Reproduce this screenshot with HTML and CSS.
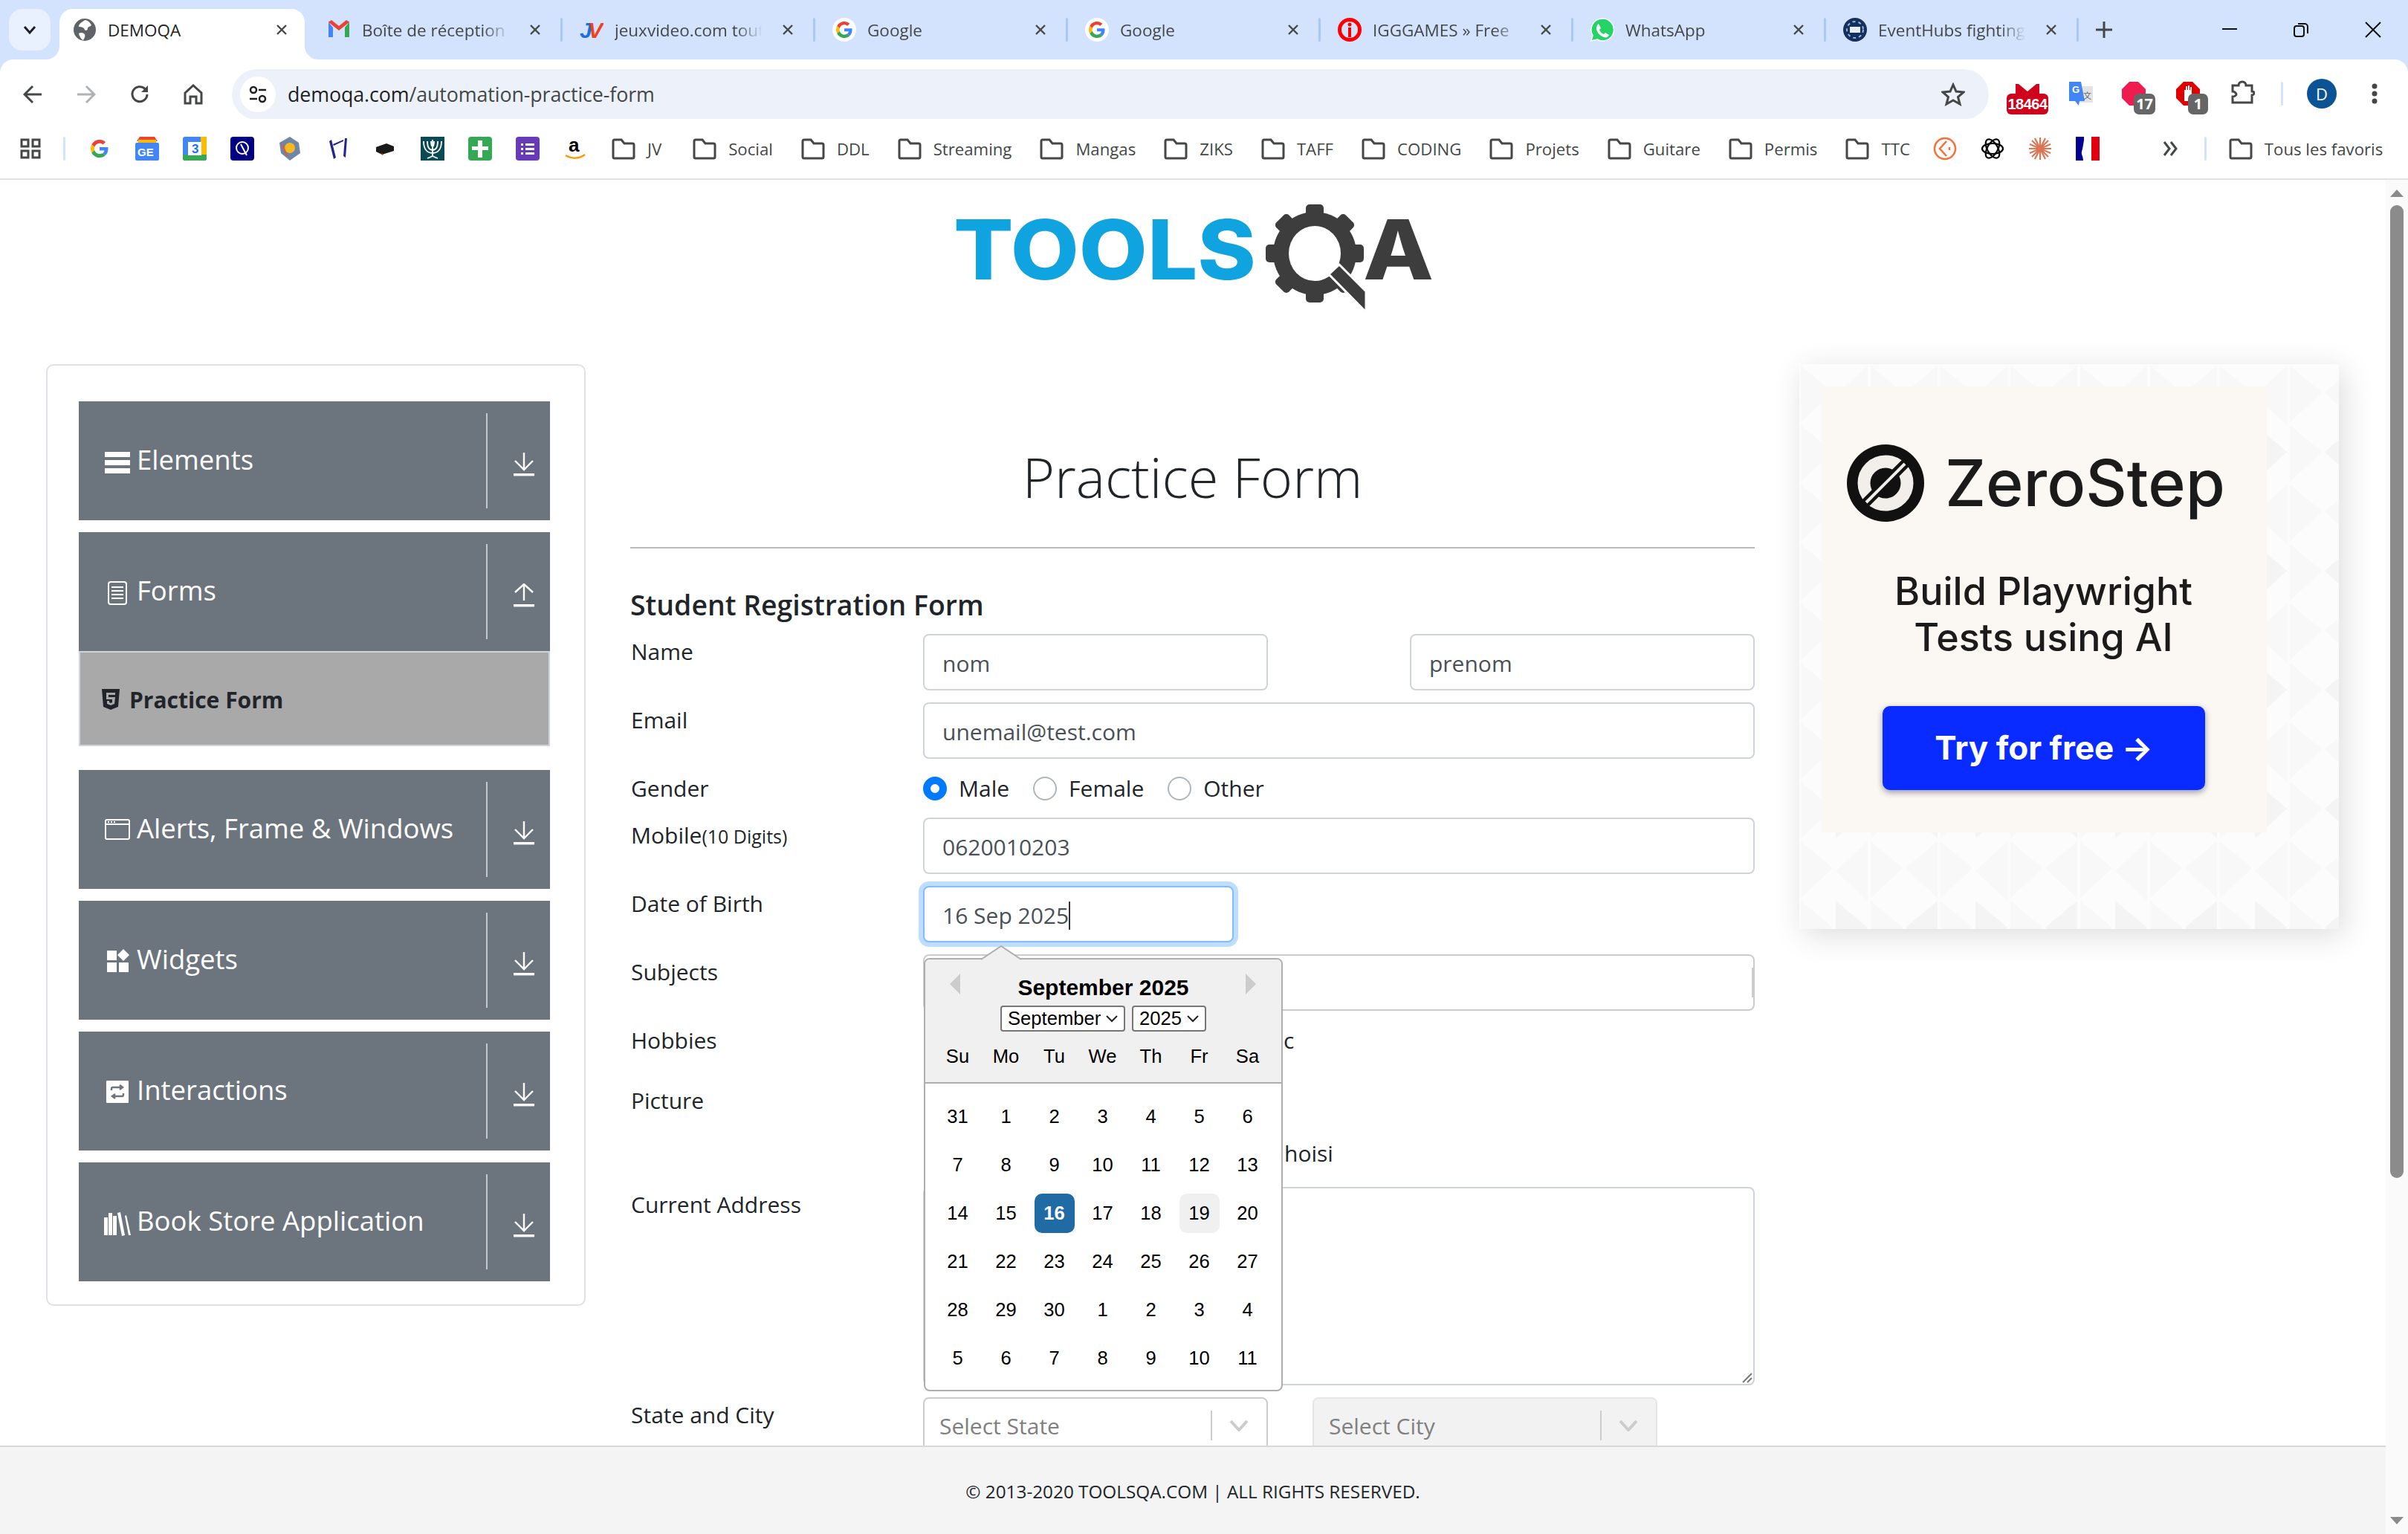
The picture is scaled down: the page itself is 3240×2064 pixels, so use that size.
FILE: index.html
```html
<!DOCTYPE html>
<html lang="fr">

<head>
	<meta charset="utf-8">
	<title>DEMOQA</title>
	<link rel="stylesheet" href="styles.css">
</head>

<body>
	<svg class="defs" width="0" height="0">
		<symbol id="x" viewBox="0 0 16 16"><path d="M2 2l12 12M14 2L2 14" stroke="#444746" stroke-width="2.4" fill="none" /></symbol>
		<symbol id="folder" viewBox="0 0 32 32"><path d="M2 6a2 2 0 0 1 2-2h9l4 5h11a2 2 0 0 1 2 2v16a2 2 0 0 1-2 2H4a2 2 0 0 1-2-2z" fill="none" stroke="#444746" stroke-width="3" /></symbol>
		<symbol id="google" viewBox="0 0 48 48">
			<path fill="#EA4335" d="M24 9.5c3.54 0 6.71 1.22 9.21 3.6l6.85-6.85C35.9 2.38 30.47 0 24 0 14.62 0 6.51 5.38 2.56 13.22l7.98 6.19C12.43 13.72 17.74 9.5 24 9.5z" />
			<path fill="#4285F4" d="M46.98 24.55c0-1.57-.15-3.09-.38-4.55H24v9.02h12.94c-.58 2.96-2.26 5.48-4.78 7.18l7.73 6c4.51-4.18 7.09-10.36 7.09-17.65z" />
			<path fill="#FBBC05" d="M10.53 28.59c-.48-1.45-.76-2.99-.76-4.59s.27-3.14.76-4.59l-7.98-6.19C.92 16.46 0 20.12 0 24c0 3.88.92 7.54 2.56 10.78l7.97-6.19z" />
			<path fill="#34A853" d="M24 48c6.48 0 11.93-2.13 15.89-5.81l-7.73-6c-2.15 1.45-4.92 2.3-8.16 2.3-6.26 0-11.57-4.22-13.47-9.91l-7.98 6.19C6.51 42.62 14.62 48 24 48z" />
		</symbol>
		<symbol id="down" viewBox="0 0 28 32"><path d="M14 0v22M2 11l12 12 12-12" fill="none" stroke="#fff" stroke-width="2.4" /><rect y="28" width="28" height="3.4" fill="#fff" /></symbol>
		<symbol id="up" viewBox="0 0 28 32"><path d="M14 23V1M2 12L14 1l12 11" fill="none" stroke="#fff" stroke-width="2.4" /><rect y="28" width="28" height="3.4" fill="#fff" /></symbol>
		<symbol id="chev" viewBox="0 0 26 16"><path d="M2 2l11 12L24 2" fill="none" stroke="#ccc" stroke-width="4" /></symbol>
		<pattern id="tri" width="188" height="160" patternUnits="userSpaceOnUse">
			<rect width="188" height="160" fill="#fcfcfc" />
			<path d="M2 2l43 36L2 78zM49 42l43-40v80zM96 2l43 36-43 40zM186 2v76l-43-40zM2 82l43 36-43 40zM96 82l43 36-43 40z" fill="#f8f8f8" />
			<path d="M49 82l43 36-43 40zM143 118l43-36v76z" fill="#f4f4f4" />
		</pattern>
	</svg>

	<header class="chrome">
		<div class="tabstrip">
			<div class="tab-search"><svg width="18" height="14" viewBox="0 0 18 14"><path d="M2 3l7 8 7-8" fill="none" stroke="#1f1f1f" stroke-width="3" /></svg></div>
			<div class="tab tab-active">
				<svg class="favicon" viewBox="0 0 32 32"><circle cx="16" cy="16" r="15" fill="#5f6368" /><path d="M16 3c-3 3-8 4-8 9 4 0 7 1 8 4 1 2 4 1 4-2 0-2 3-2 5-4-2-4-5-7-9-7zM8 21c3-2 6-1 8 1 1 2 0 5-2 8-3-1-5-5-6-9z" fill="#fff" /></svg>
				<span class="tab-title">DEMOQA</span>
				<svg class="tab-x"><use href="#x" /></svg>
			</div>
			<div class="tab tab-first">
				<svg class="favicon" viewBox="0 0 32 32"><path d="M2 6v20h6V13z" fill="#4285f4" /><path d="M24 26h6V6l-6 7z" fill="#34a853" /><path d="M2 6l14 11L30 6v-.5L26 3l-10 8L6 3 2 5.500z" fill="#ea4335" /></svg>
				<span class="tab-title">Boîte de réception</span>
				<svg class="tab-x"><use href="#x" /></svg>
			</div>
			<div class="tab">
				<svg class="favicon" viewBox="0 0 32 32"><text x="0" y="27" class="jv-j">J</text><text x="11" y="27" class="jv-v">V</text></svg>
				<span class="tab-title">jeuxvideo.com tout</span>
				<svg class="tab-x"><use href="#x" /></svg>
			</div>
			<div class="tab">
				<svg class="favicon" viewBox="0 0 32 32"><circle cx="16" cy="16" r="16" fill="#fff" /><use href="#google" x="5" y="5" width="22" height="22" /></svg>
				<span class="tab-title">Google</span>
				<svg class="tab-x"><use href="#x" /></svg>
			</div>
			<div class="tab">
				<svg class="favicon" viewBox="0 0 32 32"><circle cx="16" cy="16" r="16" fill="#fff" /><use href="#google" x="5" y="5" width="22" height="22" /></svg>
				<span class="tab-title">Google</span>
				<svg class="tab-x"><use href="#x" /></svg>
			</div>
			<div class="tab">
				<svg class="favicon" viewBox="0 0 32 32"><circle cx="16" cy="16" r="13.500" fill="none" stroke="#f00" stroke-width="5" /><rect x="14" y="13" width="4" height="13" fill="#f00" /><circle cx="16" cy="9" r="2.500" fill="#f00" /></svg>
				<span class="tab-title">IGGGAMES » Free</span>
				<svg class="tab-x"><use href="#x" /></svg>
			</div>
			<div class="tab">
				<svg class="favicon" viewBox="0 0 32 32"><path d="M16 1a15 15 0 0 0-13 22.500L1 31l8-2A15 15 0 1 0 16 1z" fill="#25d366" stroke="#fff" stroke-width="1.500" /><path d="M11 8l3 6-2 2c1 3 3 5 6 6l2-2 5 3c-1 3-4 4-7 3-5-2-9-6-10-11 0-3 1-6 3-7z" fill="#fff" /></svg>
				<span class="tab-title">WhatsApp</span>
				<svg class="tab-x"><use href="#x" /></svg>
			</div>
			<div class="tab">
				<svg class="favicon" viewBox="0 0 32 32"><circle cx="16" cy="16" r="16" fill="#14305f" /><circle cx="16" cy="16" r="11" fill="none" stroke="#9db4d4" stroke-width="2" stroke-dasharray="4 4" /><rect x="9" y="12" width="14" height="8" fill="#e8eef6" /></svg>
				<span class="tab-title">EventHubs fighting</span>
				<svg class="tab-x"><use href="#x" /></svg>
			</div>
			<svg class="new-tab" width="22" height="22" viewBox="0 0 22 22"><path d="M11 0v22M0 11h22" stroke="#444746" stroke-width="3" /></svg>
			<div class="win-btns">
				<svg width="20" height="4" viewBox="0 0 20 4"><rect width="20" height="2" fill="#111" /></svg>
				<svg width="20" height="20" viewBox="0 0 20 20"><rect x="1" y="5" width="13" height="14" rx="3" fill="none" stroke="#111" stroke-width="2" /><path d="M6 2h9a4 4 0 0 1 4 4v9" fill="none" stroke="#111" stroke-width="2" /></svg>
				<svg width="22" height="22" viewBox="0 0 22 22"><path d="M1 1l20 20M21 1L1 21" stroke="#111" stroke-width="2" /></svg>
			</div>
		</div>

		<div class="toolbar">
			<svg class="tool" width="26" height="26" viewBox="0 0 26 26"><path d="M25 13H3M13 2L2 13l11 11" fill="none" stroke="#444746" stroke-width="3" /></svg>
			<svg class="tool" width="26" height="26" viewBox="0 0 26 26"><path d="M1 13h22M13 2l11 11-11 11" fill="none" stroke="#b0b2b4" stroke-width="3" /></svg>
			<svg class="tool" width="26" height="26" viewBox="0 0 26 26"><path d="M23 13a10 10 0 1 1-3-7.500L23 8" fill="none" stroke="#444746" stroke-width="3" /><path d="M24 1v9h-9z" fill="#444746" /></svg>
			<svg class="tool" width="26" height="28" viewBox="0 0 26 28"><path d="M2 12L13 2l11 10v14h-7v-9H9v9H2z" fill="none" stroke="#444746" stroke-width="3" /></svg>
			<div class="omnibox">
				<div class="site-chip"><svg width="24" height="24" viewBox="0 0 24 24"><circle cx="6" cy="6" r="4" fill="none" stroke="#1f1f1f" stroke-width="2.500" /><path d="M13 6h10M1 18h10" stroke="#1f1f1f" stroke-width="2.500" /><circle cx="18" cy="18" r="4" fill="none" stroke="#1f1f1f" stroke-width="2.500" /></svg></div>
				<span class="url">demoqa.com<span class="url-path">/automation-practice-form</span></span>
				<svg class="star" width="32" height="32" viewBox="0 0 32 32"><path d="M16 3l4 9 10 1-7.500 6.500L25 29l-9-5-9 5 2.500-9.500L2 13l10-1z" fill="none" stroke="#444746" stroke-width="3" /></svg>
			</div>
			<div class="ext-row">
				<div class="ext ext-mail"><svg width="32" height="13" viewBox="0 0 32 13"><path d="M0 0h32v13H0z" fill="#d0021b" /><path d="M4 0l12 10L28 0z" fill="#fff" /></svg><span class="mail-count">18464</span></div>
				<svg class="ext-tr" width="32" height="32" viewBox="0 0 32 32"><rect x="14" y="6" width="18" height="22" fill="#e3e3e3" /><path d="M0 0h16l5 26h-7l-1 6-5-6H0z" fill="#4285f4" /><text x="4" y="15" class="tr-g">G</text><text x="19" y="23" class="tr-a">文</text></svg>
				<div class="ext ext-abp"><svg width="32" height="32" viewBox="0 0 32 32"><path d="M10 0h12l10 10v12L22 32H10L0 22V10z" fill="#ef1c4f" /></svg><span class="ext-badge">17</span></div>
				<div class="ext ext-ub"><svg width="32" height="32" viewBox="0 0 32 32"><path d="M10 0h12l10 10v12L22 32H10L0 22V10z" fill="#e00000" /><path d="M11 26V11h2V6h2v5h1V5h2v6h1V7h2v12h-4v7z" fill="#fff" /></svg><span class="ext-badge">1</span></div>
				<svg class="puzzle" width="32" height="32" viewBox="0 0 32 32"><path d="M2 7h8c0-3 2-5 5-5s5 2 5 5h8v8c2 0 3 1 3 2s-1 3-3 3v10H2v-8c3 0 5-2 5-3s-2-4-5-4z" fill="none" stroke="#444746" stroke-width="3" /></svg>
				<span class="bar-sep"></span>
				<span class="avatar">D</span>
				<svg class="dots" width="8" height="28" viewBox="0 0 8 28"><circle cx="4" cy="4" r="3.500" fill="#444746" /><circle cx="4" cy="14" r="3.500" fill="#444746" /><circle cx="4" cy="24" r="3.500" fill="#444746" /></svg>
			</div>
		</div>

		<div class="bookmarks">
			<svg class="apps" width="28" height="28" viewBox="0 0 28 28"><path d="M2 2h9v9H2zM17 2h9v9h-9zM2 17h9v9H2zM17 17h9v9h-9z" fill="none" stroke="#444746" stroke-width="3" /></svg>
			<span class="bar-sep bm-sep"></span>
			<div class="bm-icons">
				<svg viewBox="0 0 32 32"><use href="#google" x="4" y="4" width="24" height="24" /></svg>
				<svg viewBox="0 0 32 32"><path d="M6 0h20l4 6H2z" fill="#ea4335" /><path d="M4 4h24v6H4z" fill="#fbbc04" /><rect y="8" width="32" height="24" rx="2" fill="#4285f4" /><text x="3" y="26" class="ws-g">GE</text></svg>
				<svg viewBox="0 0 32 32"><rect width="32" height="32" rx="3" fill="#4285f4" /><path d="M24 0h8v24h-8z" fill="#fbbc04" /><path d="M0 24h32v5a3 3 0 0 1-3 3H3a3 3 0 0 1-3-3z" fill="#34a853" /><rect x="7" y="7" width="18" height="18" fill="#fff" /><text x="12" y="22" class="cal-n">3</text></svg>
				<svg viewBox="0 0 32 32"><rect width="32" height="32" rx="4" fill="#000080" /><circle cx="16" cy="15" r="8" fill="none" stroke="#fff" stroke-width="2" /><path d="M14 10l8 15" stroke="#fff" stroke-width="2" /></svg>
				<svg viewBox="0 0 32 32"><path d="M16 0l12 8 2 14-14 10L4 22 2 8z" fill="#6f86a8" /><circle cx="16" cy="15" r="7" fill="#f5b921" /><path d="M6 10l6 16" stroke="#e45b2b" stroke-width="2" /></svg>
				<svg viewBox="0 0 32 32"><path d="M5 6l6 24 3-2L8 4zM26 2l-2 24 3 2 2-26zM10 10l14-6v2l-13 6z" fill="#26268a" /></svg>
				<svg viewBox="0 0 32 32"><path d="M4 14l14-5 10 4v6l-16 5-8-4z" fill="#1a1a1a" /><path d="M10 22l3 3 1-2z" fill="#c0392b" /></svg>
				<svg viewBox="0 0 32 32"><rect width="32" height="32" fill="#0b4a54" /><path d="M4 6c0 12 6 16 12 16s12-4 12-16M9 6c0 9 3 12 7 12s7-3 7-12M14 6c0 5 1 7 2 7s2-2 2-7M16 4v22M9 29c3-1 5-2 7-3 2 1 4 2 7 3" fill="none" stroke="#fff" stroke-width="1.800" /></svg>
				<svg viewBox="0 0 32 32"><rect width="32" height="32" rx="4" fill="#34a853" /><path d="M13 5h6v8h8v5h-8v10h-6V18H5v-5h8z" fill="#fff" /></svg>
				<svg viewBox="0 0 32 32"><rect width="32" height="32" rx="4" fill="#673ab7" /><path d="M7 9h3v3H7zM13 9h12v3H13zM7 15h3v3H7zM13 15h12v3H13zM7 21h3v3H7zM13 21h12v3H13z" fill="#fff" /></svg>
				<svg viewBox="0 0 32 32"><text x="7" y="20" class="amz">a</text><path d="M3 25c8 5 18 5 26-1" fill="none" stroke="#f90" stroke-width="2.500" /></svg>
			</div>
			<div class="bm bm-jv"><svg><use href="#folder" /></svg><span>JV</span></div>
			<div class="bm"><svg><use href="#folder" /></svg><span>Social</span></div>
			<div class="bm"><svg><use href="#folder" /></svg><span>DDL</span></div>
			<div class="bm"><svg><use href="#folder" /></svg><span>Streaming</span></div>
			<div class="bm"><svg><use href="#folder" /></svg><span>Mangas</span></div>
			<div class="bm"><svg><use href="#folder" /></svg><span>ZIKS</span></div>
			<div class="bm"><svg><use href="#folder" /></svg><span>TAFF</span></div>
			<div class="bm"><svg><use href="#folder" /></svg><span>CODING</span></div>
			<div class="bm"><svg><use href="#folder" /></svg><span>Projets</span></div>
			<div class="bm"><svg><use href="#folder" /></svg><span>Guitare</span></div>
			<div class="bm"><svg><use href="#folder" /></svg><span>Permis</span></div>
			<div class="bm"><svg><use href="#folder" /></svg><span>TTC</span></div>
			<div class="bm-icons bm-icons-end">
				<svg viewBox="0 0 32 32"><circle cx="16" cy="16" r="14" fill="none" stroke="#f5703a" stroke-width="2.500" /><path d="M18 6L9 16l9 10M22 14v4" fill="none" stroke="#f5703a" stroke-width="2.500" /></svg>
				<svg viewBox="0 0 32 32"><g fill="none" stroke="#000" stroke-width="2.200"><ellipse cx="16" cy="16" rx="14" ry="7" /><ellipse cx="16" cy="16" rx="14" ry="7" transform="rotate(60 16 16)" /><ellipse cx="16" cy="16" rx="14" ry="7" transform="rotate(120 16 16)" /></g></svg>
				<svg viewBox="0 0 32 32"><path d="M16 1v30M1 16h30M5 5l22 22M27 5L5 27M9 2l14 28M23 2L9 30M2 10l28 12M30 10L2 22" stroke="#d97757" stroke-width="2.200" /></svg>
				<svg viewBox="0 0 32 32"><rect width="11" height="32" fill="#000091" /><rect x="11" width="11" height="32" fill="#fff" /><rect x="21" width="11" height="32" fill="#e1000f" /><path d="M12 0c4 6 8 8 8 14s-3 8-5 18h-5c0-6-3-8-2-12 2-6 2-12 4-20z" fill="#fff" /></svg>
			</div>
			<svg class="bm-more" width="20" height="22" viewBox="0 0 20 22"><path d="M2 2l7 9-7 9M11 2l7 9-7 9" fill="none" stroke="#444746" stroke-width="3" /></svg>
			<span class="bar-sep bm-sep2"></span>
			<div class="bm bm-all"><svg><use href="#folder" /></svg><span>Tous les favoris</span></div>
		</div>
	</header>

	<div class="viewport">
		<div class="site">
			<main class="page">
				<div class="logo-row">
					<svg class="logo" width="642" height="146" viewBox="0 0 642 146">
						<text x="-5" y="101" class="logo-tools" textLength="407" lengthAdjust="spacingAndGlyphs">TOOLS</text>
						<g fill="#3d3d3d">
							<rect x="469" y="0" width="24" height="132" rx="5" />
							<rect x="469" y="0" width="24" height="132" rx="5" transform="rotate(45 481 66)" />
							<rect x="469" y="0" width="24" height="132" rx="5" transform="rotate(90 481 66)" />
							<rect x="469" y="0" width="24" height="132" rx="5" transform="rotate(135 481 66)" />
							<ellipse cx="481" cy="66" rx="56" ry="56" />
						</g>
						<ellipse cx="481" cy="66" rx="35" ry="37" fill="#fff" />
						<path d="M500 94l14-13 36 36v28z" fill="#3d3d3d" stroke="#fff" stroke-width="3" />
						<text x="546" y="101" class="logo-a" textLength="95" lengthAdjust="spacingAndGlyphs">A</text>
					</svg>
				</div>
				<div class="columns">
					<aside class="side-card">
						<div class="menu-item"><svg class="menu-icon" viewBox="0 0 34 40"><path d="M0 8h34v7H0zM0 19h34v7H0zM0 30h34v7H0z" fill="#fff" /></svg><span class="menu-text">Elements</span><span class="menu-sep"></span><svg class="menu-arrow"><use href="#down" /></svg></div>
						<div class="menu-item menu-open"><svg class="menu-icon" viewBox="0 0 34 40"><rect x="5" y="7" width="24" height="30" rx="3" fill="none" stroke="#fff" stroke-width="2" /><path d="M9 14h16M9 19h16M9 24h16M9 29h16" stroke="#fff" stroke-width="2" /></svg><span class="menu-text">Forms</span><span class="menu-sep"></span><svg class="menu-arrow"><use href="#up" /></svg></div>
						<div class="submenu-item"><svg width="24" height="28" viewBox="0 0 24 28"><path d="M0 0h24l-2 24-10 4-10-4z" fill="#212529" /><path d="M6 5h12v3H9v3h9l-1 9-5 2-5-2v-4h3v2l2 1 2-1v-4H6z" fill="#a9a9a9" /></svg><span>Practice Form</span></div>
						<div class="menu-item"><svg class="menu-icon" viewBox="0 0 34 40"><rect x="1" y="7" width="32" height="26" rx="2" fill="none" stroke="#fff" stroke-width="2" /><path d="M1 13h32" stroke="#fff" stroke-width="2" /><path d="M4 9h2v2H4zM8 9h2v2H8zM12 9h2v2h-2z" fill="#fff" /></svg><span class="menu-text">Alerts, Frame &amp; Windows</span><span class="menu-sep"></span><svg class="menu-arrow"><use href="#down" /></svg></div>
						<div class="menu-item"><svg class="menu-icon" viewBox="0 0 34 40"><path d="M3 7h13v13H3zM3 23h13v13H3zM19 23h13v13H19zM25 5l8 8-8 8-8-8z" fill="#fff" /></svg><span class="menu-text">Widgets</span><span class="menu-sep"></span><svg class="menu-arrow"><use href="#down" /></svg></div>
						<div class="menu-item"><svg class="menu-icon" viewBox="0 0 34 40"><rect x="2" y="6" width="30" height="30" rx="1" fill="#fff" /><path d="M9 19v-2a2 2 0 0 1 2-2h12M20 12l4 3-4 3M25 23v2a2 2 0 0 1-2 2H11M14 24l-4 3 4 3" fill="none" stroke="#6c757d" stroke-width="2.400" /></svg><span class="menu-text">Interactions</span><span class="menu-sep"></span><svg class="menu-arrow"><use href="#down" /></svg></div>
						<div class="menu-item"><svg class="menu-icon" viewBox="0 0 36 40"><path d="M0 14h5v24H0zM6 8h5v30H6zM12 12h5v26h-5zM18 8l4-1 6 31-4 1zM28 12l2-1 6 27h-3z" fill="#fff" /></svg><span class="menu-text">Book Store Application</span><span class="menu-sep"></span><svg class="menu-arrow"><use href="#down" /></svg></div>
					</aside>

					<section class="content">
						<h1 class="title">Practice Form</h1>
						<hr class="rule">
						<h5 class="form-title">Student Registration Form</h5>
						<div class="row">
							<label>Name</label>
							<div class="names">
								<div class="field">nom</div>
								<div class="field">prenom</div>
							</div>
						</div>
						<div class="row">
							<label>Email</label>
							<div class="field">unemail@test.com</div>
						</div>
						<div class="row row-gender">
							<label>Gender</label>
							<div class="radios">
								<span class="radio radio-on"></span><span class="radio-text">Male</span>
								<span class="radio"></span><span class="radio-text">Female</span>
								<span class="radio"></span><span class="radio-text">Other</span>
							</div>
						</div>
						<div class="row">
							<label>Mobile<small>(10 Digits)</small></label>
							<div class="field">0620010203</div>
						</div>
						<div class="row">
							<label>Date of Birth</label>
							<div class="dob-wrap">
								<div class="field field-focus">16 Sep 2025<span class="caret"></span></div>
								<div class="datepicker">
									<svg class="dp-tip" width="54" height="20" viewBox="0 0 54 20"><path d="M0 19L27 1l27 18" fill="#f0f0f0" stroke="#aeaeae" stroke-width="2" /></svg>
									<div class="dp-head">
										<svg class="dp-nav dp-prev" width="14" height="28" viewBox="0 0 14 28"><path d="M14 0v28L0 14z" fill="#ccc" /></svg>
										<svg class="dp-nav dp-next" width="14" height="28" viewBox="0 0 14 28"><path d="M0 0v28l14-14z" fill="#ccc" /></svg>
										<div class="dp-month">September 2025</div>
										<div class="dp-selects">
											<span class="dp-select dp-select-m">September<svg width="16" height="10" viewBox="0 0 16 10"><path d="M1 1l7 7 7-7" fill="none" stroke="#222" stroke-width="2" /></svg></span>
											<span class="dp-select dp-select-y">2025<svg width="16" height="10" viewBox="0 0 16 10"><path d="M1 1l7 7 7-7" fill="none" stroke="#222" stroke-width="2" /></svg></span>
										</div>
										<div class="dp-names"><span>Su</span><span>Mo</span><span>Tu</span><span>We</span><span>Th</span><span>Fr</span><span>Sa</span></div>
									</div>
									<div class="dp-days">
										<span>31</span><span>1</span><span>2</span><span>3</span><span>4</span><span>5</span><span>6</span>
										<span>7</span><span>8</span><span>9</span><span>10</span><span>11</span><span>12</span><span>13</span>
										<span>14</span><span>15</span><span class="dp-selected">16</span><span>17</span><span>18</span><span class="dp-today">19</span><span>20</span>
										<span>21</span><span>22</span><span>23</span><span>24</span><span>25</span><span>26</span><span>27</span>
										<span>28</span><span>29</span><span>30</span><span>1</span><span>2</span><span>3</span><span>4</span>
										<span>5</span><span>6</span><span>7</span><span>8</span><span>9</span><span>10</span><span>11</span>
									</div>
								</div>
							</div>
						</div>
						<div class="row">
							<label>Subjects</label>
							<div class="field field-subjects"></div>
						</div>
						<div class="row row-hobbies">
							<label>Hobbies</label>
							<div class="hobbies">c</div>
						</div>
						<div class="row row-picture">
							<label>Picture</label>
							<div class="picture">hoisi</div>
						</div>
						<div class="row">
							<label>Current Address</label>
							<div class="textarea"><svg class="grip" width="16" height="16" viewBox="0 0 16 16"><path d="M15 3L3 15M15 9l-6 6" stroke="#777" stroke-width="2" /></svg></div>
						</div>
						<div class="row">
							<label>State and City</label>
							<div class="selects">
								<div class="select"><span class="select-ph">Select State</span><span class="select-sep"></span><svg class="select-chev"><use href="#chev" /></svg></div>
								<div class="select select-off"><span class="select-ph">Select City</span><span class="select-sep"></span><svg class="select-chev"><use href="#chev" /></svg></div>
							</div>
						</div>
					</section>

					<aside class="ad">
						<svg class="ad-bg" width="726" height="760"><rect width="726" height="760" fill="url(#tri)" /></svg>
						<div class="ad-inner">
							<div class="ad-brand">
								<svg width="104" height="104" viewBox="0 0 104 104"><circle cx="52" cy="52" r="52" fill="#111" /><circle cx="52" cy="52" r="29" fill="none" stroke="#f2eee9" stroke-width="17" /><circle cx="52" cy="52" r="13" fill="#111" /><path d="M24 80l56-56" stroke="#111" stroke-width="13" /><path d="M26 78l52-52" stroke="#f2eee9" stroke-width="4" /></svg>
								<span>ZeroStep</span>
							</div>
							<p class="ad-text">Build Playwright<br>Tests using AI</p>
							<div class="ad-btn">Try for free →</div>
						</div>
					</aside>
				</div>
			</main>
			<footer class="foot"><span>© 2013-2020 TOOLSQA.COM | ALL RIGHTS RESERVED.</span></footer>
		</div>
		<div class="scrollbar">
			<svg width="18" height="10" viewBox="0 0 18 10"><path d="M0 10L9 0l9 10z" fill="#8b8b8b" /></svg>
			<div class="scroll-thumb"></div>
			<svg class="scroll-down" width="18" height="10" viewBox="0 0 18 10"><path d="M0 0l9 10 9-10z" fill="#8b8b8b" /></svg>
		</div>
	</div>
</body>

</html>
```
FILE: styles.css
```css
* {
	box-sizing: border-box;
}

html,
body {
	margin: 0;
	height: 100%;
}

body {
	display: flex;
	flex-direction: column;
	height: 2064px;
	overflow: hidden;
	background: #fff;
	color: #212529;
	font-family: "Open Sans", "Noto Sans", sans-serif;
	font-size: 30px;
}

.defs {
	position: absolute;
}

/* browser chrome */
.chrome {
	flex: none;
	height: 242px;
	background: #d3e3fd;
	border-bottom: 2px solid #e2e2e2;
	font-size: 22.5px;
	color: #444746;
}

.tabstrip {
	height: 80px;
	background: #d3e3fd;
	display: flex;
	align-items: flex-start;
	padding-left: 12px;
	position: relative;
}

.tab-search {
	width: 56px;
	height: 56px;
	margin-top: 12px;
	margin-right: 12px;
	background: #e9f1fe;
	border-radius: 18px;
	display: flex;
	align-items: center;
	justify-content: center;
}

.tab {
	width: 340px;
	height: 56px;
	margin-top: 12px;
	padding-left: 23px;
	padding-right: 29px;
	display: flex;
	align-items: center;
	flex: none;
	position: relative;
}

.tab::after {
	content: "";
	position: absolute;
	right: 0;
	top: 12px;
	height: 32px;
	width: 3px;
	border-radius: 2px;
	background: #a8c7fa;
}

.tab-first {
	margin-left: 7px;
}

.tab-active {
	width: 330px;
	height: 68px;
	padding-left: 18px;
	padding-right: 23px;
	padding-bottom: 12px;
	background: #fff;
	border-radius: 18px 18px 0 0;
	color: #1f1f1f;
}

.tab-active::before,
.tab-active::after {
	content: "";
	position: absolute;
	bottom: 0;
	top: auto;
	width: 18px;
	height: 18px;
	border-radius: 0;
}

.tab-active::before {
	left: -18px;
	background: radial-gradient(circle at 0 0, transparent 17.5px, #fff 18.5px);
}

.tab-active::after {
	right: -18px;
	background: radial-gradient(circle at 100% 0, transparent 17.5px, #fff 18.5px);
}

.favicon {
	width: 32px;
	height: 32px;
	flex: none;
	margin-right: 15px;
}

.tab-title {
	flex: 1;
	white-space: nowrap;
	overflow: hidden;
	-webkit-mask-image: linear-gradient(to right, #000 82%, transparent 100%);
	mask-image: linear-gradient(to right, #000 82%, transparent 100%);
}

.tab-active .tab-title {
	-webkit-mask-image: none;
	mask-image: none;
}

.tab-x {
	width: 16px;
	height: 16px;
	flex: none;
	margin-left: 26px;
}

.jv-j,
.jv-v {
	font: italic 700 30px "Liberation Sans", sans-serif;
}

.jv-j {
	fill: #1a6fe8;
}

.jv-v {
	fill: #f0421c;
}

.new-tab {
	margin: 29px 0 0 23px;
}

.win-btns {
	margin-left: auto;
	width: 250px;
	padding: 0 36px 0 0;
	height: 80px;
	display: flex;
	align-items: center;
	justify-content: space-between;
}

.toolbar {
	height: 80px;
	background: #fff;
	border-radius: 18px 18px 0 0;
	display: flex;
	align-items: center;
	padding-left: 31px;
	padding-top: 14px;
	position: relative;
}

.tool {
	flex: none;
	margin-right: 46px;
}

.omnibox {
	width: 2364px;
	height: 68px;
	margin-left: -7px;
	background: #edf2fa;
	border-radius: 34px;
	display: flex;
	align-items: center;
	padding-left: 11px;
	padding-right: 32px;
	color: #1f1f1f;
}

.site-chip {
	width: 48px;
	height: 48px;
	border-radius: 50%;
	background: #fff;
	display: flex;
	align-items: center;
	justify-content: center;
	flex: none;
}

.url {
	margin-left: 16px;
	font-size: 26.8px;
	letter-spacing: -0.1px;
	padding-bottom: 2px;
}

.url-path {
	color: #444746;
}

.star {
	margin-left: auto;
}

.ext-row {
	flex: 1;
	position: relative;
	height: 68px;
}

.ext-row > * {
	position: absolute;
}

.ext-mail {
	left: 24px;
	top: 20px;
	width: 56px;
	display: flex;
	flex-direction: column;
	align-items: center;
}

.mail-count {
	width: 56px;
	height: 28px;
	border-radius: 6px;
	background: #d0021b;
	color: #fff;
	font: 700 20px/28px "Liberation Sans", sans-serif;
	text-align: center;
	letter-spacing: -0.5px;
	white-space: nowrap;
	overflow: hidden;
}

.ext-tr {
	left: 108px;
	top: 17px;
}

.tr-g {
	font: 700 13px "Liberation Sans", sans-serif;
	fill: #fff;
}

.tr-a {
	font: 11px "Noto Sans CJK SC", sans-serif;
	fill: #5f6368;
}

.ext-abp {
	left: 179px;
	top: 17px;
	width: 45px;
	height: 44px;
}

.ext-ub {
	left: 252px;
	top: 17px;
	width: 43px;
	height: 44px;
}

.ext-badge {
	position: absolute;
	right: 0;
	top: 16px;
	min-width: 27px;
	padding: 0 3px;
	height: 28px;
	background: #666;
	border-radius: 7px;
	color: #fff;
	font-weight: 700;
	font-size: 20px;
	line-height: 28px;
	text-align: center;
}

.puzzle {
	left: 326px;
	top: 15px;
}

.bar-sep {
	display: block;
	width: 3px;
	height: 32px;
	background: #d3e3fd;
	border-radius: 2px;
}

.ext-row .bar-sep {
	left: 393px;
	top: 17px;
}

.avatar {
	left: 428px;
	top: 13px;
	width: 40px;
	height: 40px;
	border-radius: 50%;
	background: #0b5394;
	color: #fff;
	font-size: 22px;
	line-height: 40px;
	text-align: center;
}

.dots {
	left: 515px;
	top: 19px;
}

.bookmarks {
	height: 80px;
	background: #fff;
	display: flex;
	align-items: center;
	padding-left: 27px;
	white-space: nowrap;
	position: relative;
}

.apps {
	flex: none;
}

.bm-sep {
	margin-left: 30px;
	margin-right: 30px;
}

.bm-icons {
	display: flex;
	gap: 32px;
	margin-right: 33px;
}

.bm-icons svg {
	width: 32px;
	height: 32px;
	flex: none;
}

.bm-icons-end {
	margin-left: -7px;
	margin-right: 0;
}

.bm {
	display: flex;
	align-items: center;
	gap: 16px;
	margin-right: 38px;
	flex: none;
	font-size: 22.2px;
}

.bm-jv {
	margin-right: 42px;
}

.bm svg {
	width: 32px;
	height: 32px;
	flex: none;
}

.bm-more {
	margin-left: 85px;
}

.bm-sep2 {
	margin-left: 36px;
	margin-right: 30px;
}

.bm-all {
	margin-right: 0;
}

.ws-g {
	font: 700 15px "Liberation Sans", sans-serif;
	fill: #fff;
}

.cal-n {
	font: 700 17px "Liberation Sans", sans-serif;
	fill: #1a73e8;
}

.amz {
	font: 700 26px "Liberation Sans", sans-serif;
	fill: #000;
}

/* the site */
.viewport {
	flex: 1;
	display: flex;
	min-height: 0;
}

.site {
	flex: 1;
	min-width: 0;
	display: flex;
	flex-direction: column;
}

.page {
	flex: 1;
	min-height: 0;
	overflow: hidden;
}

.logo-row {
	height: 248px;
	padding-top: 33px;
	padding-left: 8px;
	display: flex;
	justify-content: center;
}

.logo {
	overflow: visible;
}

.logo-tools {
	font: 800 111px Inter, sans-serif;
	fill: #0fa3e0;
}

.logo-a {
	font: 800 111px Inter, sans-serif;
	fill: #3d3d3d;
}

.columns {
	display: flex;
	align-items: flex-start;
	padding-left: 62px;
}

.side-card {
	width: 726px;
	height: 1267px;
	flex: none;
	border: 2px solid #dee2e6;
	border-radius: 10px;
	padding: 48px 46px 0 42px;
}

.menu-item {
	height: 160px;
	margin-bottom: 16px;
	background: #6c757d;
	color: #fff;
	display: flex;
	align-items: center;
	padding-left: 34px;
	position: relative;
}

.menu-open {
	margin-bottom: 0;
}

.menu-icon {
	width: 36px;
	height: 40px;
	flex: none;
	margin-right: 8px;
}

.menu-text {
	font-size: 36.5px;
	line-height: 1;
	padding-bottom: 4px;
	white-space: nowrap;
}

.menu-sep {
	position: absolute;
	left: 548px;
	top: 16px;
	bottom: 16px;
	width: 2px;
	background: #c4c8cc;
}

.menu-arrow {
	position: absolute;
	left: 585px;
	top: 69px;
	width: 28px;
	height: 32px;
}

.submenu-item {
	height: 128px;
	margin-bottom: 32px;
	background: #a9a9a9;
	border: 2px solid #ced4da;
	display: flex;
	align-items: center;
	padding-left: 29px;
	padding-top: 2px;
	gap: 13px;
	font-size: 30px;
	font-weight: 700;
}

.content {
	width: 1513px;
	margin-left: 60px;
	flex: none;
}

.title {
	margin: 0;
	padding-top: 102px;
	height: 246px;
	text-align: center;
	font-size: 74px;
	font-weight: 300;
	line-height: 100px;
}

.rule {
	margin: 0;
	border: 0;
	border-top: 2px solid #b8b8b8;
}

.form-title {
	margin: 0;
	padding-top: 49px;
	height: 115px;
	font-size: 37.4px;
	font-weight: 600;
	line-height: 54px;
}

.row {
	display: flex;
	margin-bottom: 16px;
}

.row label {
	width: 394px;
	flex: none;
	padding-left: 1px;
	line-height: 48px;
}

.row small {
	font-size: 25px;
}

.names {
	flex: 1;
	display: flex;
	justify-content: space-between;
}

.names .field {
	flex: none;
	width: 464px;
}

.field {
	flex: 1;
	height: 76px;
	border: 2px solid #ced4da;
	border-radius: 8px;
	padding-left: 24px;
	color: #495057;
	line-height: 76px;
	background: #fff;
}

.field-subjects {
	border-color: #ccc;
	position: relative;
}

.field-subjects::after {
	content: "";
	position: absolute;
	right: 0;
	top: 16px;
	bottom: 16px;
	width: 2px;
	background: #ccc;
}

.dob-wrap {
	width: 418px;
	position: relative;
}

.field-focus {
	border-color: #80bdff;
	box-shadow: 0 0 0 6px rgba(0, 123, 255, 0.25);
}

.caret {
	display: inline-block;
	width: 2px;
	height: 38px;
	background: #333;
	vertical-align: -8px;
}

.row-gender {
	height: 48px;
	margin-top: 0;
	margin-bottom: 15px;
}

.radios {
	display: flex;
	align-items: center;
	line-height: 48px;
}

.radio {
	width: 32px;
	height: 32px;
	border-radius: 50%;
	border: 2px solid #adb5bd;
	background: #fff;
}

.radio-on {
	border: 10px solid #007bff;
}

.radio-text {
	margin-left: 16px;
	margin-right: 32px;
}

.datepicker {
	position: absolute;
	z-index: 2;
	left: 1px;
	top: 97px;
	width: 483px;
	height: 583px;
	background: #fff;
	border: 2px solid #aeaeae;
	border-radius: 8px;
	font-family: "Liberation Sans", sans-serif;
	font-size: 25.6px;
	color: #000;
}

.dp-tip {
	position: absolute;
	left: 75px;
	top: -19px;
	z-index: 1;
}

.dp-head {
	height: 167px;
	background: #f0f0f0;
	border-bottom: 2px solid #aeaeae;
	border-radius: 6px 6px 0 0;
	position: relative;
	padding-top: 20px;
}

.dp-nav {
	position: absolute;
	top: 19px;
}

.dp-prev {
	left: 33px;
}

.dp-next {
	right: 34px;
}

.dp-month {
	text-align: center;
	font-size: 30px;
	font-weight: 700;
	line-height: 36px;
}

.dp-selects {
	display: flex;
	justify-content: center;
	gap: 9px;
	margin-top: 6px;
}

.dp-select {
	height: 35px;
	background: #fff;
	border: 2px solid #767676;
	border-radius: 4px;
	display: flex;
	align-items: center;
	justify-content: space-between;
	padding: 0 8px 0 8px;
}

.dp-select-m {
	width: 168px;
}

.dp-select-y {
	width: 100px;
}

.dp-names {
	display: grid;
	grid-template-columns: repeat(7, 65px);
	padding-left: 11px;
	margin-top: 15px;
	text-align: center;
	line-height: 36px;
}

.dp-days {
	display: grid;
	grid-template-columns: repeat(7, 65px);
	grid-auto-rows: 65px;
	padding: 12px 0 0 11px;
	justify-items: center;
	align-items: center;
}

.dp-days span {
	width: 54px;
	height: 53px;
	line-height: 53px;
	text-align: center;
	border-radius: 10px;
}

.dp-selected {
	background: #216ba5;
	color: #fff;
	font-weight: 700;
}

.dp-today {
	background: #f0f0f0;
}

.row-hobbies {
	height: 65px;
}

.hobbies,
.picture {
	line-height: 48px;
	white-space: nowrap;
}

.hobbies {
	padding-left: 485px;
}

.row-picture {
	height: 124px;
}

.picture {
	padding-top: 71px;
	padding-left: 486px;
}

.textarea {
	flex: 1;
	height: 267px;
	border: 2px solid #ced4da;
	border-radius: 8px;
	position: relative;
}

.grip {
	position: absolute;
	right: 1px;
	bottom: 1px;
}

.selects {
	flex: 1;
	display: flex;
	gap: 60px;
}

.select {
	width: 464px;
	height: 76px;
	border: 2px solid #ccc;
	border-radius: 8px;
	display: flex;
	align-items: center;
	padding-left: 20px;
	position: relative;
}

.select-off {
	background: #f2f2f2;
	border-color: #e6e6e6;
}

.select-ph {
	color: #808080;
}

.select-sep {
	position: absolute;
	right: 73px;
	top: 16px;
	bottom: 16px;
	width: 2px;
	background: #ccc;
}

.select-chev {
	position: absolute;
	right: 24px;
	top: 28px;
	width: 26px;
	height: 16px;
}

.ad {
	width: 726px;
	height: 760px;
	margin-left: 60px;
	flex: none;
	position: relative;
	box-shadow: 6px 8px 40px rgba(0, 0, 0, 0.14);
}

.ad-bg {
	position: absolute;
	left: 0;
	top: 0;
}

.ad-inner {
	position: absolute;
	left: 30px;
	top: 30px;
	width: 599px;
	height: 600px;
	background: #fbf7f2;
	display: flex;
	flex-direction: column;
	font-family: Inter, sans-serif;
	color: #1b1b1b;
	padding-top: 78px;
}

.ad-brand {
	display: flex;
	align-items: center;
	gap: 28px;
	padding-left: 34px;
	font-size: 86px;
	font-weight: 500;
	line-height: 104px;
}

.ad-text {
	margin: 63px 0 0;
	text-align: center;
	font-size: 52px;
	font-weight: 500;
	line-height: 62px;
	padding-right: 2px;
}

.ad-btn {
	width: 434px;
	height: 113px;
	margin: 61px 0 0 82px;
	background: #0a2bff;
	border-radius: 10px;
	box-shadow: 0 3px 8px rgba(0, 0, 60, 0.4);
	color: #fff;
	font-size: 44px;
	font-weight: 700;
	line-height: 113px;
	text-align: center;
}

.foot {
	flex: none;
	height: 119px;
	background: #f4f4f4;
	border-top: 2px solid #d8d8d8;
	text-align: center;
	line-height: 120px;
	font-size: 24.3px;
	position: relative;
	z-index: 3;
}

.scrollbar {
	width: 30px;
	flex: none;
	background: #fafafa;
	position: relative;
	padding: 13px 6px 0;
	display: flex;
	flex-direction: column;
}

.scroll-thumb {
	height: 1309px;
	margin-top: 11px;
	background: #8b8b8b;
	border-radius: 9px;
}

.scroll-down {
	position: absolute;
	left: 6px;
	bottom: 13px;
}
```
